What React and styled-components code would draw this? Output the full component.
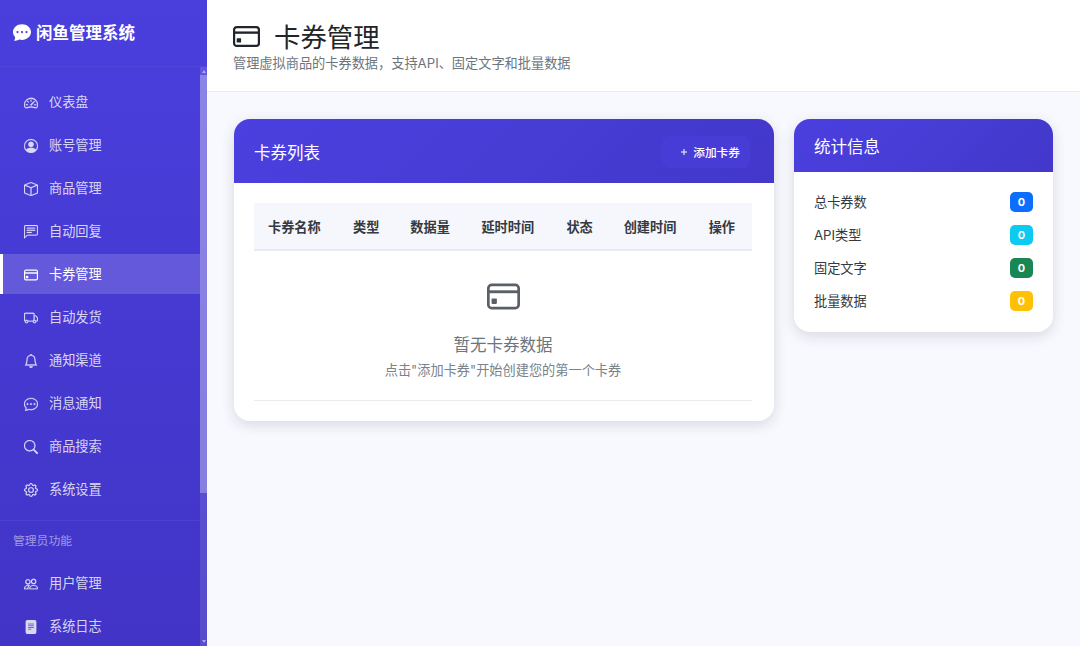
import React from 'react';
import styled, { createGlobalStyle } from 'styled-components';
import {
  BsChatDotsFill, BsSpeedometer2, BsPersonCircle, BsBox, BsChatLeftText,
  BsTruck, BsBell, BsChatDots, BsSearch, BsGear, BsPeople, BsFileTextFill, BsPlusLg,
} from 'react-icons/bs';

const Global = createGlobalStyle`
  html, body { margin: 0; padding: 0; height: 100%; }
  body { font-family: Inter, "Noto Sans CJK SC", "Liberation Sans", sans-serif; font-size: 13.2px; color: #212529; overflow: hidden; }
  #root { height: 100%; }
`;

const CardIcon = () => (
  <svg viewBox="0 0 16 16" fill="currentColor" aria-hidden="true">
    <rect x="0.65" y="2.4" width="14.7" height="11.2" rx="1.6" fill="none" stroke="currentColor" strokeWidth="1.3" />
    <rect x="0.65" y="5" width="14.7" height="1.4" />
    <rect x="2.2" y="9" width="2.6" height="2.6" rx="0.4" />
  </svg>
);

const Shell = styled.div`display: flex; height: 646px; width: 1080px; overflow: hidden;`;

const Sidebar = styled.aside`
  width: 207px; flex: none; display: flex; flex-direction: column; height: 100%;
  background: linear-gradient(180deg, #4a3fdd 0%, #4134c6 100%);
  color: #fff;
`;
const Brand = styled.div`
  height: 67px; box-sizing: border-box; flex: none; display: flex; align-items: center; gap: 5px;
  padding: 0 13px 2px; border-bottom: 1px solid rgba(255,255,255,.04);
  font-size: 16.5px; font-weight: 700; color: #fff;
  svg { width: 18px; height: 18px; }
`;
const NavArea = styled.div`flex: 1; min-height: 0; display: flex;`;
const Nav = styled.nav`flex: 1; min-width: 0; overflow: hidden; padding-top: 15px; box-sizing: border-box;`;
const NavList = styled.div`display: flex; flex-direction: column; gap: 3px;`;
const Item = styled.a`
  display: flex; align-items: center; gap: 11px; height: 40px; flex: none; box-sizing: border-box; padding: 1px 0 0 21px;
  border-left: 3px solid ${p => (p.$active ? '#fff' : 'transparent')};
  background: ${p => (p.$active ? 'rgba(255,255,255,.16)' : 'transparent')};
  color: ${p => (p.$active ? '#fff' : 'rgba(255,255,255,.8)')};
  font-size: 13.2px; line-height: 1;
  svg { width: 14px; height: 14px; flex: none; stroke: currentColor; stroke-width: .3; }
`;
const Divider = styled.div`height: 1px; background: rgba(255,255,255,.05); margin: 11px 0 0;`;
const SectionLabel = styled.div`
  font-size: 11.8px; color: rgba(255,255,255,.5); padding: 0 13px; height: 20px; line-height: 20px; margin: 10px 0 12px;
`;
const ScrollRail = styled.div`
  width: 7px; flex: none; display: flex; flex-direction: column; justify-content: space-between;
  background: rgba(255,255,255,.12); padding: 3px 0;
`;
const ScrollArrow = styled.div`
  flex: none; height: 0; width: 0; margin: 0 auto;
  border-left: 2.5px solid transparent; border-right: 2.5px solid transparent;
  ${p => (p.$down ? 'border-top: 3px solid rgba(255,255,255,.5);' : 'border-bottom: 3px solid rgba(255,255,255,.5);')}
`;
const ScrollThumb = styled.div`flex: none; height: 418px; margin: 2px 0 auto; background: rgba(255,255,255,.28);`;

const Main = styled.main`flex: 1; min-width: 0; background: #f8f9fe; display: flex; flex-direction: column;`;
const Header = styled.header`
  height: 92px; box-sizing: border-box; flex: none; background: #fff; border-bottom: 1px solid #e9ecef;
  padding: 19px 26px 0;
`;
const Title = styled.h1`
  margin: 0; display: flex; align-items: center; gap: 14px; font-size: 26.4px; font-weight: 400; line-height: 36px; color: #212529;
  svg { width: 27px; height: 27px; margin-top: -2px; }
`;
const Subtitle = styled.p`margin: -1px 0 0; font-size: 13.2px; line-height: 18px; color: #6c757d;`;

const Content = styled.div`display: flex; align-items: flex-start; gap: 20px; padding: 27px 26px 27px 27px;`;
const Card = styled.section`
  width: ${p => p.$w}px; flex: none; background: #fff; border-radius: 16px; overflow: hidden;
  box-shadow: 0 4px 14px rgba(30,30,60,.14);
`;
const CardHead = styled.div`
  height: ${p => p.$h}px; box-sizing: border-box; display: flex; align-items: center; justify-content: space-between;
  padding: 1px 24px 0 20px; color: #fff; font-size: 16.5px;
  background: linear-gradient(135deg, #4b40df 0%, #4338ca 100%);
`;
const AddButton = styled.button`
  display: flex; align-items: center; gap: 5px; height: 32px; padding: 0 10px 0 18px; border: 0; border-radius: 8px;
  background: #473cd6; color: #fff; font: inherit; font-size: 11.7px; font-weight: 500;
  svg { width: 8px; height: 8px; stroke: currentColor; stroke-width: .8; }
`;
const TableWrap = styled.div`padding: 20px 22px 20px 20px;`;
const Table = styled.table`width: 100%; border-collapse: collapse;`;
const Th = styled.th`
  height: 47px; box-sizing: border-box; padding: 0 14px; background: #f6f6fd; border-bottom: 2px solid #e8e9f6;
  font-size: 13.2px; font-weight: 700; color: #343a40; text-align: left; white-space: nowrap;
`;
const EmptyCell = styled.td`padding: 29px 0 0; border-bottom: 1px solid #e9ecef; height: 150px; box-sizing: border-box; vertical-align: top; text-align: center;`;
const EmptyWrap = styled.div`
  display: flex; flex-direction: column; align-items: center; color: #6c757d;
  svg { width: 33px; height: 33px; color: #5a6068; }
`;
const EmptyTitle = styled.div`font-size: 16.5px; line-height: 24px; margin-top: 20px;`;
const EmptyText = styled.div`font-size: 13.2px; line-height: 18px; margin-top: 4px; color: #7a828a;`;

const StatBody = styled.div`padding: 13px 20px 15px 20px; display: flex; flex-direction: column;`;
const StatRow = styled.div`height: 33px; display: flex; align-items: center; justify-content: space-between; color: #343a40;`;
const Badge = styled.span`
  width: 23px; height: 20px; border-radius: 5px; background: ${p => p.$c}; color: #fff;
  font-size: 10.9px; font-weight: 700; display: flex; align-items: center; justify-content: center;
`;

const items = [
  [BsSpeedometer2, '仪表盘'], [BsPersonCircle, '账号管理'], [BsBox, '商品管理'], [BsChatLeftText, '自动回复'],
  [CardIcon, '卡券管理', true], [BsTruck, '自动发货'], [BsBell, '通知渠道'], [BsChatDots, '消息通知'],
  [BsSearch, '商品搜索'], [BsGear, '系统设置'],
];
const admin = [[BsPeople, '用户管理'], [BsFileTextFill, '系统日志']];
const cols = ['卡券名称', '类型', '数据量', '延时时间', '状态', '创建时间', '操作'];
const stats = [['总卡券数', '#0d6efd'], ['API类型', '#0dcaf0'], ['固定文字', '#198754'], ['批量数据', '#ffc107']];

export default function App() {
  return (
    <Shell>
      <Global />
      <Sidebar>
        <Brand><BsChatDotsFill />闲鱼管理系统</Brand>
        <NavArea>
          <Nav>
            <NavList>
              {items.map(([I, t, a]) => <Item key={t} $active={a}><I />{t}</Item>)}
            </NavList>
            <Divider />
            <SectionLabel>管理员功能</SectionLabel>
            <NavList>
              {admin.map(([I, t]) => <Item key={t}><I />{t}</Item>)}
            </NavList>
          </Nav>
          <ScrollRail>
            <ScrollArrow />
            <ScrollThumb />
            <ScrollArrow $down />
          </ScrollRail>
        </NavArea>
      </Sidebar>
      <Main>
        <Header>
          <Title><CardIcon />卡券管理</Title>
          <Subtitle>管理虚拟商品的卡券数据，支持API、固定文字和批量数据</Subtitle>
        </Header>
        <Content>
          <Card $w={540}>
            <CardHead $h={64}>
              卡券列表
              <AddButton><BsPlusLg />添加卡券</AddButton>
            </CardHead>
            <TableWrap>
              <Table>
                <thead><tr>{cols.map(c => <Th key={c}>{c}</Th>)}</tr></thead>
                <tbody>
                  <tr>
                    <EmptyCell colSpan={7}>
                      <EmptyWrap>
                        <CardIcon />
                        <EmptyTitle>暂无卡券数据</EmptyTitle>
                        <EmptyText>点击"添加卡券"开始创建您的第一个卡券</EmptyText>
                      </EmptyWrap>
                    </EmptyCell>
                  </tr>
                </tbody>
              </Table>
            </TableWrap>
          </Card>
          <Card $w={259}>
            <CardHead $h={53}>统计信息</CardHead>
            <StatBody>
              {stats.map(([t, c]) => <StatRow key={t}>{t}<Badge $c={c}>0</Badge></StatRow>)}
            </StatBody>
          </Card>
        </Content>
      </Main>
    </Shell>
  );
}
